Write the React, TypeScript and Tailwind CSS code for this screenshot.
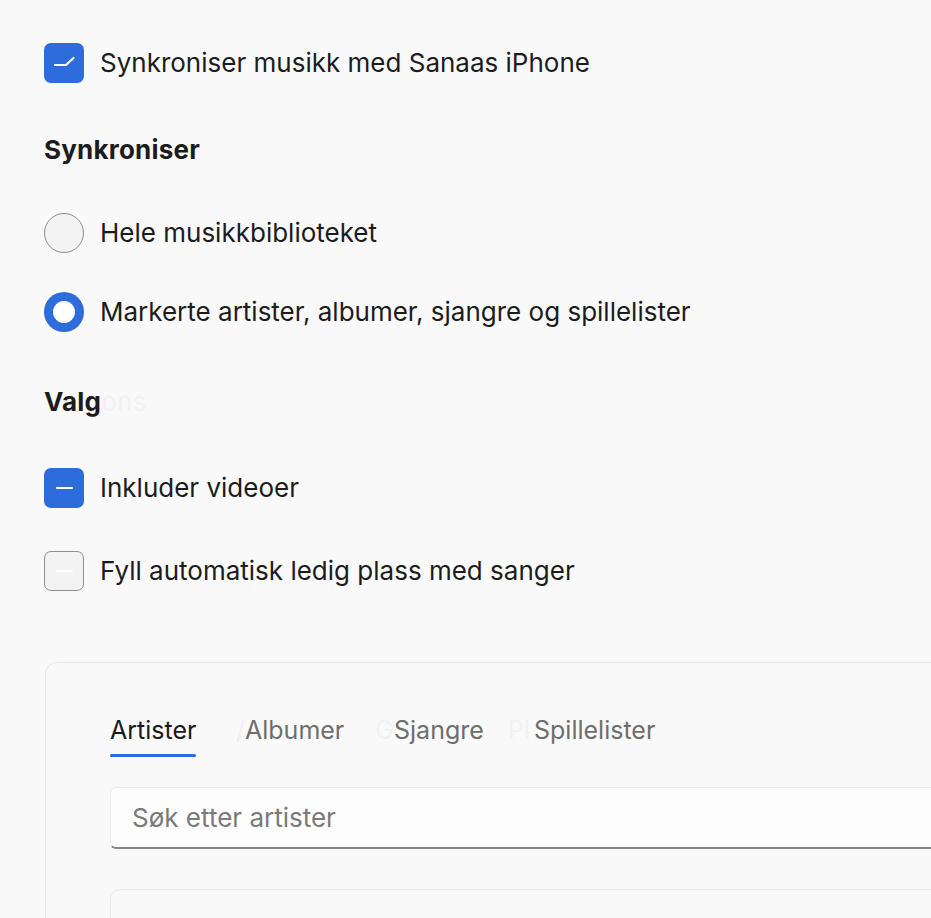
import React from "react";

const font = { fontFamily: "Inter, 'Noto Sans', sans-serif" };

function CheckedBox() {
  return (
    <div className="w-10 h-10 rounded-[7px] bg-[#2c6ddb] flex-none">
      <svg viewBox="0 0 40 40" className="w-10 h-10">
        <path d="M11 22 L22 22 L29.5 15" fill="none" stroke="#ffffff" strokeWidth="2.2" strokeLinecap="round" strokeLinejoin="round" />
      </svg>
    </div>
  );
}

function IndeterminateBox() {
  return (
    <div className="w-10 h-10 rounded-[7px] bg-[#2c6ddb] flex-none flex items-center justify-center">
      <div className="w-[17px] h-[2.5px] rounded-full bg-white" />
    </div>
  );
}

function EmptyBox() {
  return (
    <div className="w-10 h-10 rounded-[7px] bg-[#f3f3f3] border-[1.5px] border-[#8f8f8f] flex-none flex items-center justify-center">
      <div className="w-[17px] h-[2px] rounded-full bg-white" />
    </div>
  );
}

function RadioOff() {
  return <div className="w-10 h-10 rounded-full bg-[#f3f3f3] border-[1.5px] border-[#8c8c8c] flex-none" />;
}

function RadioOn() {
  return (
    <div className="w-10 h-10 rounded-full bg-[#2c6ddb] flex-none flex items-center justify-center">
      <div className="w-[22px] h-[22px] rounded-full bg-white" />
    </div>
  );
}

function Row({ control, label }: { control: React.ReactNode; label: string }) {
  return (
    <div className="flex items-center h-10">
      {control}
      <span className="ml-[16px] text-[26px] leading-[36px] text-[#1c1c1c] whitespace-nowrap">{label}</span>
    </div>
  );
}

export default function App() {
  return (
    <div className="w-full h-[918px] overflow-hidden bg-[#f9f9f9]" style={font}>
      <div className="pl-[44px] pt-[43px] w-[1000px] flex flex-col">
        <Row control={<CheckedBox />} label="Synkroniser musikk med Sanaas iPhone" />

        <div className="mt-[49px] h-9 flex items-center text-[26px] font-bold tracking-[0.2px] text-[#1c1c1c] leading-[36px]">
          Synkroniser
        </div>

        <div className="mt-[45px]">
          <Row control={<RadioOff />} label="Hele musikkbiblioteket" />
        </div>
        <div className="mt-[39px]">
          <Row control={<RadioOn />} label="Markerte artister, albumer, sjangre og spillelister" />
        </div>

        <div className="mt-[52px] h-9 flex items-center text-[26px] font-bold tracking-[0.2px] leading-[36px]">
          <span className="text-[#1c1c1c]">Valg</span>
          <span className="text-[#f1f1f1] font-normal">ons</span>
        </div>

        <div className="mt-[48px]">
          <Row control={<IndeterminateBox />} label="Inkluder videoer" />
        </div>
        <div className="mt-[43px]">
          <Row control={<EmptyBox />} label="Fyll automatisk ledig plass med sanger" />
        </div>

        <div className="mt-[71px] ml-px border border-[#e6e6e6] rounded-[12px] bg-[#f9f9f9] pl-[64px] pt-[49px] pb-10">
          <div className="flex items-start text-[25px] leading-[36px] whitespace-nowrap">
            <div className="w-[126px]">
              <div className="flex flex-col w-[86px]">
                <span className="text-[#1a1a1a]">Artister</span>
                <div className="mt-[6px] h-[3px] rounded-full bg-[#2c6ddb]" />
              </div>
            </div>
            <div className="w-[9px] text-[#f0f0f0]">/</div>
            <div className="w-[130px] text-[#6e6e6e]">Albumer</div>
            <div className="w-[19px] text-[#f1f1f1]">G</div>
            <div className="w-[114px] text-[#6e6e6e]">Sjangre</div>
            <div className="w-[26px] text-[#f1f1f1]">Pl</div>
            <div className="text-[#6e6e6e]">Spillelister</div>
          </div>

          <div className="mt-[30px] h-[62px] bg-[#fdfdfd] border border-[#ebebeb] border-b-2 border-b-[#868686] rounded-[6px] flex items-center pl-[21px]">
            <span className="text-[26px] text-[#7a7a7a]">Søk etter artister</span>
          </div>

          <div className="mt-[40px] h-[120px] border border-[#e9e9e9] rounded-[10px] bg-[#f9f9f9]" />
        </div>
      </div>
    </div>
  );
}
